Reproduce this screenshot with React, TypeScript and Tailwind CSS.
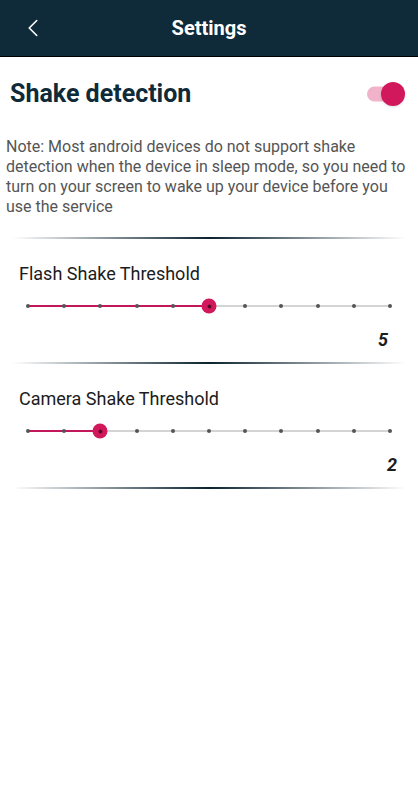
import { ChevronLeft } from 'lucide-react'

function Divider() {
  return (
    <div className="mx-3 h-[2px] bg-gradient-to-r from-transparent via-[#0b2230] to-transparent" />
  )
}

function StepSlider({ value, max = 10 }: { value: number; max?: number }) {
  const ticks = Array.from({ length: max + 1 }, (_, i) => i)
  const pct = (value / max) * 100
  return (
    <div className="relative mx-[28px] h-4">
      <div className="absolute left-0 right-0 top-1/2 h-[2px] -translate-y-1/2 bg-[#d4d4d4]" />
      <div
        className="absolute left-0 top-1/2 h-[2px] -translate-y-1/2 bg-[#c2185b]"
        style={{ width: `${pct}%` }}
      />
      {ticks.map((t) => (
        <div
          key={t}
          className="absolute top-1/2 h-1 w-1 -translate-x-1/2 -translate-y-1/2 rounded-full bg-[#555]"
          style={{ left: `${(t / max) * 100}%` }}
        />
      ))}
      <div
        className="absolute top-1/2 flex h-[15px] w-[15px] -translate-x-1/2 -translate-y-1/2 items-center justify-center rounded-full bg-[#d2185c]"
        style={{ left: `${pct}%` }}
      >
        <div className="h-1 w-1 rounded-full bg-[#5a0a24]" />
      </div>
    </div>
  )
}

function ThresholdRow({ label, value, numPad }: { label: string; value: number; numPad: string }) {
  return (
    <div className="pt-[23px]">
      <p className="pl-[19px] text-[18px] leading-6 text-[#1c1c1c]">{label}</p>
      <div className="mt-[12px]">
        <StepSlider value={value} />
      </div>
      <div className={`mt-[14px] flex justify-end ${numPad}`}>
        <span className="text-[18px] font-bold italic leading-6 text-[#1c1c1c]">{value}</span>
      </div>
      <div className="mt-[10px]">
        <Divider />
      </div>
    </div>
  )
}

export default function App() {
  return (
    <div className="min-h-screen w-full bg-white" style={{ fontFamily: 'Roboto, "Liberation Sans", sans-serif' }}>
      <header className="relative flex h-[57px] items-center justify-center border-b border-black bg-[#0f2a38]">
        <ChevronLeft className="absolute left-[18px] h-[30px] w-[30px] text-white" strokeWidth={1.3} />
        <h1 className="text-[20px] font-bold text-white">Settings</h1>
      </header>

      <div className="flex items-center justify-between pl-[10px] pr-[13px] pt-[21px]">
        <h2 className="text-[25px] font-bold leading-8 text-[#0f2a38]">Shake detection</h2>
        <div className="relative h-[24px] w-[38px]">
          <div className="absolute left-0 right-1 top-1/2 h-[15px] -translate-y-1/2 rounded-full bg-[#f1b3c9]" />
          <div className="absolute right-0 top-0 h-[24px] w-[24px] rounded-full bg-[#d2185c] shadow" />
        </div>
      </div>

      <p className="mt-[27px] px-[6px] text-[16px] leading-[20px] text-[#555]">
        Note: Most android devices do not support shake detection when the device in sleep mode, so you need to turn on your screen to wake up your device before you use the service
      </p>

      <div className="mt-[20px]">
        <Divider />
      </div>

      <ThresholdRow label="Flash Shake Threshold" value={5} numPad="pr-[30px]" />
      <ThresholdRow label="Camera Shake Threshold" value={2} numPad="pr-[21px]" />
    </div>
  )
}
